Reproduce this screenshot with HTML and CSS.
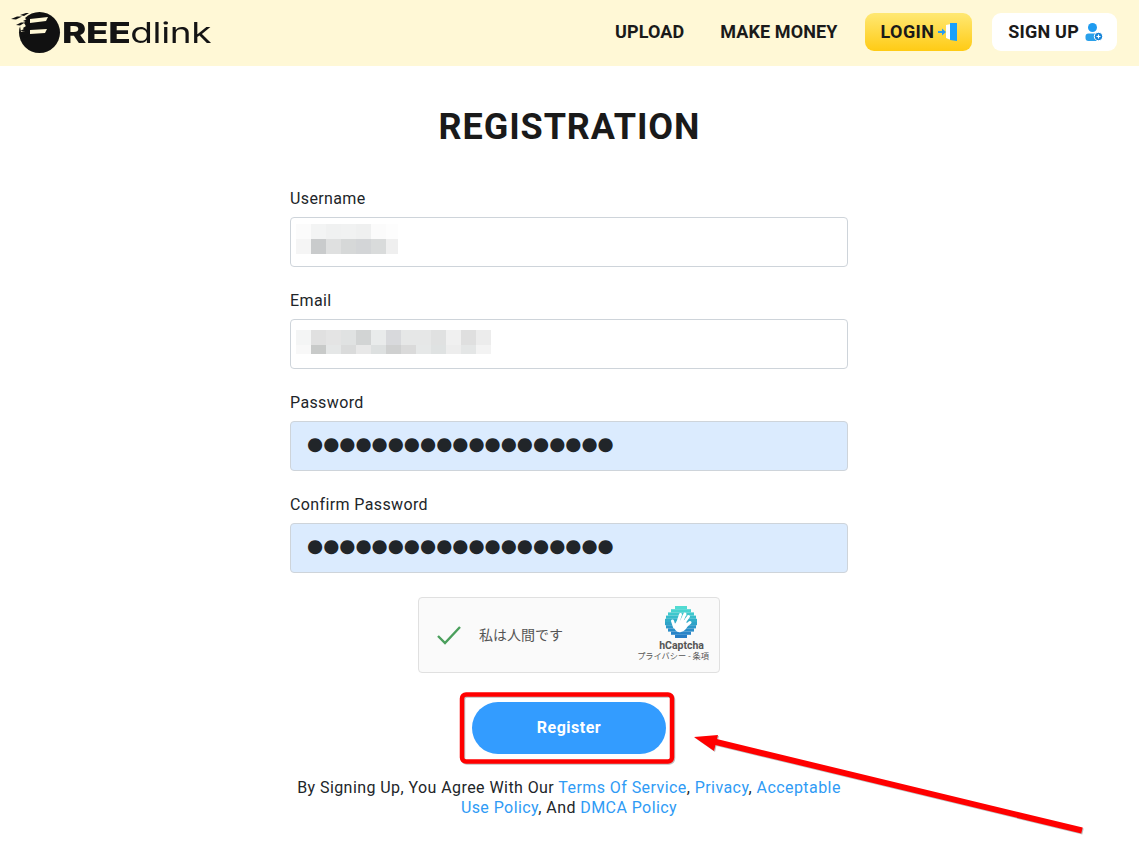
FILE: index.html
```html
<!DOCTYPE html>
<html lang="en">
<head>
<meta charset="utf-8">
<title>FREEdlink Registration</title>
<link rel="stylesheet" href="styles.css">
</head>
<body>
<header class="topbar">
  <a class="logo" href="#">
    <svg class="logo-mark" viewBox="0 0 52 44" width="52" height="44">
      <circle cx="29.500" cy="21.500" r="20.500" fill="#111"/>
      <path d="M9 9l5-3 3 3-3 3 2 3-3 2 2 3-4 1z" fill="#fff8d6"/>
      <path d="M1 8l6-2.500h5l-6 3zM10 4l6-2h3l-5 3zM6 14l5-2.500h4l-5 3zM13 10l4-2h3l-4 3zM10 20l4-2h4l-4 2.500zM15 15l4-2h3l-3 2.500zM13 26l3-2h3l-3 2.500z" fill="#111"/>
      <path d="M20 8l18-2-2 4-16 2zM20 19l17-1-2 4-15 1z" fill="#fff8d6"/>
    </svg>
    <span class="logo-text"><b>REE</b>dlink</span>
  </a>
  <nav class="nav">
    <a class="nav-link" href="#">UPLOAD</a>
    <a class="nav-link" href="#">MAKE MONEY</a>
    <a class="btn-login" href="#">LOGIN
      <svg viewBox="0 0 20 20" width="20" height="20">
        <path d="M1 9h4V6.500L9 10l-4 3.500V11H1z" fill="#2a9cf0"/>
        <path d="M9 3l5-1v16l-5-2z" fill="#fff"/>
        <path d="M13 1h7v18l-7-1z" fill="#18a0fb"/>
      </svg>
    </a>
    <a class="btn-signup" href="#">SIGN UP
      <svg viewBox="0 0 18 18" width="18" height="18">
        <circle cx="7.500" cy="4.500" r="4.500" fill="#1e9bf0"/>
        <rect x="0.500" y="10.500" width="14" height="7.500" rx="3" fill="#2aa0ea"/>
        <circle cx="13.500" cy="13.500" r="4.200" fill="#1584d8" stroke="#fff" stroke-width="1"/>
        <path d="M11.500 13.500h4M13.500 11.500v4" stroke="#fff" stroke-width="1.200"/>
      </svg>
    </a>
  </nav>
</header>
<main class="page">
  <h1 class="title">REGISTRATION</h1>
  <form class="form">
    <div class="field">
      <label class="label">Username</label>
      <div class="input">
        <svg class="pixels" width="102" height="30" viewBox="0 0 102 30">
          <rect x="0" y="0" width="15" height="15" fill="#fbfbfb"/><rect x="15" y="0" width="15" height="15" fill="#f3f4f4"/><rect x="30" y="0" width="15" height="15" fill="#f0f1f1"/><rect x="45" y="0" width="15" height="15" fill="#f1f2f2"/><rect x="60" y="0" width="15" height="15" fill="#eff0f0"/><rect x="75" y="0" width="15" height="15" fill="#fbfbfb"/><rect x="90" y="0" width="12" height="15" fill="#fdfdfd"/>
          <rect x="0" y="15" width="15" height="15" fill="#f5f5f5"/><rect x="15" y="15" width="15" height="15" fill="#c9cbcc"/><rect x="30" y="15" width="15" height="15" fill="#dfe0e0"/><rect x="45" y="15" width="15" height="15" fill="#d6d8d8"/><rect x="60" y="15" width="15" height="15" fill="#d3d5d7"/><rect x="75" y="15" width="15" height="15" fill="#d9dbdb"/><rect x="90" y="15" width="12" height="15" fill="#efefef"/>
        </svg>
      </div>
    </div>
    <div class="field">
      <label class="label">Email</label>
      <div class="input">
        <svg class="pixels pixels-low" width="195" height="24" viewBox="0 0 195 24">
          <rect x="0" y="0" width="15" height="15" fill="#f4f5f5"/><rect x="15" y="0" width="15" height="15" fill="#e0e0e0"/><rect x="30" y="0" width="15" height="15" fill="#e4e4e4"/><rect x="45" y="0" width="15" height="15" fill="#e0e2e2"/><rect x="60" y="0" width="15" height="15" fill="#d2d4d4"/><rect x="75" y="0" width="15" height="15" fill="#e9ebeb"/><rect x="90" y="0" width="15" height="15" fill="#d8d9dc"/><rect x="105" y="0" width="15" height="15" fill="#e6e7e7"/><rect x="120" y="0" width="15" height="15" fill="#e6e7e7"/><rect x="135" y="0" width="15" height="15" fill="#e0e1e1"/><rect x="150" y="0" width="15" height="15" fill="#f0f0f0"/><rect x="165" y="0" width="15" height="15" fill="#dfdfdf"/><rect x="180" y="0" width="15" height="15" fill="#ececec"/>
          <rect x="0" y="15" width="15" height="9" fill="#f8f8f8"/><rect x="15" y="15" width="15" height="9" fill="#c8cac9"/><rect x="30" y="15" width="15" height="9" fill="#e5e7e7"/><rect x="45" y="15" width="15" height="9" fill="#dadbdb"/><rect x="60" y="15" width="15" height="9" fill="#e8e8e8"/><rect x="75" y="15" width="15" height="9" fill="#dde0e0"/><rect x="90" y="15" width="15" height="9" fill="#cfd0d0"/><rect x="105" y="15" width="15" height="9" fill="#dadada"/><rect x="120" y="15" width="15" height="9" fill="#e6e8e8"/><rect x="135" y="15" width="15" height="9" fill="#dfe2e2"/><rect x="150" y="15" width="15" height="9" fill="#ededed"/><rect x="165" y="15" width="15" height="9" fill="#e4e6e6"/><rect x="180" y="15" width="15" height="9" fill="#f3f3f3"/>
        </svg>
      </div>
    </div>
    <div class="field">
      <label class="label" for="pw">Password</label>
      <input class="input input-filled" id="pw" type="text" value="●●●●●●●●●●●●●●●●●●●">
    </div>
    <div class="field">
      <label class="label" for="cpw">Confirm Password</label>
      <input class="input input-filled" id="cpw" type="text" value="●●●●●●●●●●●●●●●●●●●">
    </div>
    <div class="captcha">
      <svg class="check" viewBox="0 0 26 20" width="26" height="20"><path d="M2 11l7 7L24 2" fill="none" stroke="#4a9f5c" stroke-width="2.400"/></svg>
      <span class="captcha-text">私は人間です</span>
      <div class="captcha-brand">
        <svg class="captcha-logo" viewBox="0 0 32 32" width="32" height="32">
          <rect x="10" y="0" width="12" height="3.200" fill="#52dbd2"/>
          <rect x="6" y="3.200" width="20" height="3.200" fill="#47d3d0"/>
          <rect x="3" y="6.400" width="26" height="3.200" fill="#3fc8cd"/>
          <rect x="1" y="9.600" width="30" height="3.200" fill="#38bccb"/>
          <rect x="0" y="12.800" width="32" height="3.200" fill="#32aec9"/>
          <rect x="0" y="16" width="32" height="3.200" fill="#2fa3c8"/>
          <rect x="1" y="19.200" width="30" height="3.200" fill="#2d98c8"/>
          <rect x="3" y="22.400" width="26" height="3.200" fill="#2b8ec8"/>
          <rect x="6" y="25.600" width="20" height="3.200" fill="#2a85c8"/>
          <rect x="10" y="28.800" width="12" height="3.200" fill="#287ec6"/>
          <path d="M9 19c0 5 3 8 7 7 4-1 6-4 7-7l-3-5-8 1z" fill="#fff"/>
          <path d="M9.500 21L7.500 15M13 16l2.500-7.500M16 16.500l4-8.500M18.500 17.500l5-7M20 20.500l5-4" fill="none" stroke="#fff" stroke-width="3" stroke-linecap="round"/>
        </svg>
        <span class="captcha-name">hCaptcha</span>
        <span class="captcha-links">プライバシー - 条項</span>
      </div>
    </div>
    <button class="submit" type="button">Register</button>
    <p class="terms">By Signing Up, You Agree With Our <a href="#">Terms Of Service</a>, <a href="#">Privacy</a>, <a href="#">Acceptable Use Policy</a>, And <a href="#">DMCA Policy</a></p>
  </form>
</main>
<svg class="annotation" width="1139" height="859" viewBox="0 0 1139 859">
  <rect x="462" y="694.500" width="210" height="67" rx="4" fill="none" stroke="#f00" stroke-width="4.500"/>
  <path d="M1082 830.500L712 741" fill="none" stroke="#f00" stroke-width="6"/>
  <path d="M694 737L718 735L714 751Z" fill="#f00"/>
</svg>
</body>
</html>
```
FILE: styles.css
```css
* { box-sizing: border-box; }
html, body { margin: 0; padding: 0; }
body {
  position: relative;
  width: 1139px;
  height: 859px;
  overflow: hidden;
  background: #fff;
  color: #212529;
  font-family: Roboto, "Liberation Sans", sans-serif;
  font-size: 16px;
  letter-spacing: 0.380px;
}
a { text-decoration: none; color: inherit; }
.topbar {
  height: 66px;
  background: #fff8d6;
  display: flex;
  align-items: center;
  justify-content: space-between;
  padding: 0 22px 2px 10px;
}
.logo { display: flex; align-items: center; color: #141414; margin-top: 2px; }
.logo-text {
  display: inline-block;
  font-family: Inter, "Liberation Sans", sans-serif;
  font-size: 28px;
  font-weight: 400;
  letter-spacing: -0.300px;
  line-height: 1;
  transform: scaleX(1.32);
  transform-origin: left center;
}
.logo-text b { font-weight: 800; }
.nav { display: flex; align-items: center; gap: 36px; font-weight: 700; font-size: 18px; color: #1a1a1a; letter-spacing: 0; }
.nav-link { padding-bottom: 2px; letter-spacing: 0.100px; }
.btn-login, .btn-signup {
  display: flex;
  align-items: center;
  height: 38px;
  border-radius: 9px;
  padding-bottom: 2px;
}
.btn-login { background: linear-gradient(#ffe873, #ffcb14); margin: 0 -16px 0 -9px; padding-left: 16px; padding-right: 15px; gap: 3px; letter-spacing: 0.400px; }
.btn-signup { background: #fff; padding-left: 16px; padding-right: 14px; gap: 6px; letter-spacing: 0.200px; }
.btn-login svg, .btn-signup svg { margin-top: 2px; }
.page { display: flex; flex-direction: column; align-items: center; }
.title {
  margin: 38px 0 0;
  font-size: 36px;
  line-height: 46px;
  font-weight: 700;
  color: #1a1a1a;
  letter-spacing: 0.900px;
}
.form { width: 558px; margin: 37px 1px 0 0; display: flex; flex-direction: column; }
.field { display: flex; flex-direction: column; margin-bottom: 22px; }
.label { line-height: 24px; margin-bottom: 6px; color: #212529; }
.input {
  display: block;
  width: 100%;
  height: 50px;
  border: 1px solid #ced4da;
  border-radius: 4px;
  background: #fff;
  padding: 0 16px;
  font-family: inherit;
  color: #212529;
}
.input-filled {
  background: #dbebfe;
  font-family: "DejaVu Sans", sans-serif;
  font-size: 18.500px;
  letter-spacing: 0;
  outline: none;
  padding-bottom: 6px;
}
.pixels { display: block; margin: 6px 0 0 -11px; }
.pixels-low { margin-top: 10px; }
.captcha {
  width: 302px;
  height: 76px;
  margin: 2px auto 0;
  background: #fafafa;
  border: 1px solid #e0e0e0;
  border-radius: 4px;
  display: flex;
  align-items: center;
  padding: 0 10px 0 17px;
}
.check { flex: none; }
.captcha-text {
  margin-left: 17px;
  padding-bottom: 2px;
  font-family: "Noto Sans CJK JP", sans-serif;
  font-size: 14px;
  letter-spacing: 0;
  color: #555;
  flex: 1;
}
.captcha-brand { display: flex; flex-direction: column; align-items: flex-end; padding-bottom: 5px; letter-spacing: 0; }
.captcha-logo { margin-right: 12px; }
.captcha-name { font-family: Roboto, sans-serif; font-size: 10.500px; font-weight: 700; color: #555; line-height: 10px; margin: 3px 5px 0 0; }
.captcha-links { font-family: "Noto Sans CJK JP", sans-serif; font-size: 8.200px; color: #555; line-height: 8px; white-space: nowrap; }
.submit {
  align-self: center;
  width: 194px;
  height: 52px;
  margin-top: 29px;
  padding-bottom: 2px;
  border: 0;
  border-radius: 26px;
  background: #339cff;
  color: #fff;
  font-family: inherit;
  font-size: 16px;
  letter-spacing: 0.500px;
  font-weight: 700;
}
.terms { margin: 24px 0 0; text-align: center; line-height: 20px; letter-spacing: 0.430px; }
.terms a { color: #2f9bf5; }
.annotation { position: absolute; left: 0; top: 0; pointer-events: none; filter: drop-shadow(1px 1px 0 rgba(0, 0, 0, 0.25)); }
```
